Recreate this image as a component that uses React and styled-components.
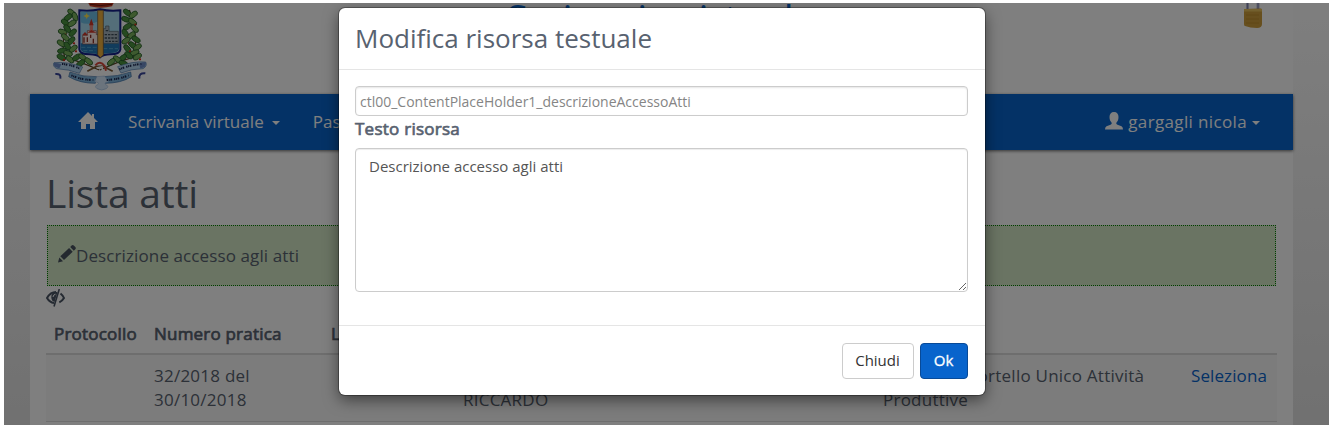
import React from "react";
import styled, { createGlobalStyle } from "styled-components";

const Global = createGlobalStyle`
  * { box-sizing: border-box; }
  html, body { margin: 0; padding: 0; background: #fff; }
  body { font-family: "Open Sans", "Noto Sans", sans-serif; font-size: 17px; color: #586270; }
`;

const Frame = styled.div`
  width: 1330px;
  height: 427px;
  padding: 3px 1px 2px 4px;
  overflow: hidden;
`;
const Viewport = styled.div`
  position: relative;
  height: 422px;
  overflow: hidden;
  background: linear-gradient(#fdfdfd, #e2e2e2);
`;
const Container = styled.div`
  width: 1263px;
  height: 422px;
  margin-left: 26px;
  background: #fff;
`;
const Header = styled.header`
  display: grid;
  grid-template-columns: 150px 1fr 150px;
  height: 91px;
  overflow: hidden;
`;
const CrestSlot = styled.div`
  padding-left: 23px;
  svg { display: block; }
`;
const SiteTitle = styled.h1`
  margin: -12px 0 0 -1px;
  text-align: center;
  font-size: 39px;
  line-height: 54px;
  font-weight: 400;
  color: #0a66cc;
`;
const LockSlot = styled.div`
  display: flex;
  justify-content: flex-end;
  padding-right: 30px;
`;
const Navbar = styled.nav`
  display: flex;
  align-items: center;
  height: 56px;
  padding: 0 33px 2px 48px;
  background: #0864cc;
  color: #fff;
  box-shadow: 0 1px 3px rgba(0, 0, 0, 0.6);
`;
const NavItem = styled.span`
  display: flex;
  align-items: center;
  white-space: nowrap;
  margin-left: ${(p) => p.$gap || "0"};
  letter-spacing: ${(p) => p.$spacing || "0.06px"};
  svg { display: block; }
`;
const Caret = styled.i`
  margin: 4px 0 0 ${(p) => p.$gap || 8}px;
  border: 4px solid transparent;
  border-top-color: currentColor;
  border-bottom: 0;
`;
const Main = styled.main`
  padding: 0 16px;
`;
const PageTitle = styled.h2`
  margin: 0;
  padding-top: 16px;
  height: 75px;
  font-size: 39px;
  line-height: 54px;
  font-weight: 400;
  letter-spacing: -0.2px;
`;
const Notice = styled.div`
  display: flex;
  align-items: center;
  height: 61px;
  margin: 0 1px;
  padding-left: 10px;
  border: 1px dotted #008000;
  background: #d4e8c6;
  letter-spacing: 0.11px;
  svg { display: block; margin-top: -4px; }
`;
const EyeRow = styled.div`
  height: 29px;
  padding-top: 3px;
  svg { display: block; }
`;
const Table = styled.table`
  width: 1231px;
  table-layout: fixed;
  border-collapse: collapse;
  line-height: 24px;
`;
const Th = styled.th`
  width: ${(p) => p.$w}px;
  height: 39px;
  padding: 6px 8px 7px;
  text-align: left;
  vertical-align: middle;
  white-space: nowrap;
  overflow: hidden;
  font-weight: 400;
  -webkit-text-stroke: 0.7px currentColor;
  letter-spacing: 0.2px;
  border-bottom: 2px solid #ddd;
`;
const Td = styled.td`
  height: 66px;
  padding: 9px 8px;
  vertical-align: top;
  white-space: nowrap;
  letter-spacing: 0.24px;
  background: #f9f9f9;
  border-bottom: 1px solid #ddd;
`;
const Link = styled.a`
  color: #0864cc;
  padding-left: 1px;
  letter-spacing: 0.1px;
`;
const Backdrop = styled.div`
  position: absolute;
  inset: 0;
  background: rgba(0, 0, 0, 0.5);
`;
const Dialog = styled.section`
  position: absolute;
  left: 335px;
  top: 5px;
  width: 645.5px;
  height: 387px;
  display: flex;
  flex-direction: column;
  background: #fff;
  border-radius: 6px;
  box-shadow: 0 0 0 1px rgba(0, 0, 0, 0.3), 0 5px 15px rgba(0, 0, 0, 0.5);
`;
const DialogTitle = styled.h3`
  margin: 0;
  height: 62px;
  padding: 12px 16px;
  font-size: 26px;
  line-height: 37px;
  font-weight: 400;
  border-bottom: 1px solid #e5e5e5;
`;
const DialogBody = styled.div`
  display: flex;
  flex-direction: column;
  height: 256px;
  padding: 16px 17px 16px 16px;
  border-bottom: 1px solid #e5e5e5;
`;
const KeyInput = styled.input`
  height: 30px;
  padding: 0 4px;
  border: 1px solid #ccc;
  border-radius: 4px;
  box-shadow: inset 0 1px 2px rgba(0, 0, 0, 0.1);
  font: 14px "Open Sans", sans-serif;
  color: #858585;
  background: #fff;
  outline: 0;
`;
const Label = styled.label`
  height: 32px;
  padding-top: 1px;
  line-height: 24px;
  -webkit-text-stroke: 0.7px currentColor;
  letter-spacing: 0.25px;
`;
const TextArea = styled.textarea`
  height: 144px;
  padding: 6px 13px;
  border: 1px solid #ccc;
  border-radius: 4px;
  box-shadow: inset 0 1px 1px rgba(0, 0, 0, 0.075);
  font: 15px/22px "Open Sans", sans-serif;
  color: #555;
  outline: 0;
`;
const DialogFooter = styled.footer`
  display: flex;
  justify-content: flex-end;
  gap: 6px;
  padding: 17px 17px 16px 16px;
`;
const Button = styled.button`
  width: ${(p) => (p.$primary ? 48 : 72)}px;
  height: 36px;
  padding: 0 0 2px;
  border: 1px solid ${(p) => (p.$primary ? "#084a98" : "#ccc")};
  border-radius: 4px;
  background: ${(p) => (p.$primary ? "#0864cc" : "#fff")};
  color: ${(p) => (p.$primary ? "#fff" : "#333")};
  font: 15px "Open Sans", sans-serif;
  -webkit-text-stroke: ${(p) => (p.$primary ? "0.3px #fff" : "0")};
`;

const leaves = [
  [95, 38, 40], [84, 52, -35], [105, 50, 70], [76, 68, 35], [96, 70, -30], [82, 86, 50], [68, 96, 20],
  [98, 98, -45], [76, 112, 40], [94, 122, -50], [64, 130, 30], [82, 138, 60], [100, 146, -40], [66, 152, -15],
  [84, 160, 20], [64, 172, 25], [90, 178, 40], [110, 172, -30], [128, 172, 40], [122, 190, -35], [146, 184, 40],
  [262, 38, 40], [280, 44, -35], [258, 58, 20], [278, 66, 35], [262, 80, -30], [284, 86, 45], [256, 100, 60],
  [274, 106, -40], [288, 118, 30], [258, 122, -30], [278, 136, 40], [292, 142, -35], [262, 146, 50], [284, 158, -20],
  [266, 166, 35], [292, 170, -30], [248, 174, -40], [232, 178, 35], [250, 190, 20], [214, 186, -40],
];

const Crest = () => (
  <svg width="97" height="91" viewBox="39 9 291 273">
    <path d="M145 9h76l-5 10q-33 8-66 0z" fill="#c43a22" />
    <path d="M150 13q32 7 66 0" fill="none" stroke="#6b1a12" strokeWidth="3" />
    <path d="M92 30Q60 120 74 172q40 10 104 38M268 30q30 90 12 142q-40 10-100 38" fill="none" stroke="#5d4420" strokeWidth="4" />
    {leaves.map(([x, y, r], i) => (
      <g key={i}>
        <ellipse cx={x} cy={y} rx="14" ry="7.500" transform={`rotate(${r} ${x} ${y})`} fill={i % 2 ? "#4c9440" : "#7cb45e"} stroke="#26602a" strokeWidth="2.500" />
        {i % 3 === 0 && <circle cx={x + 8} cy={y + 8} r="3.400" fill="#d32918" />}
      </g>
    ))}
    <path d="M118 31q32 4 62-3q32 7 61 3v118q-2 14-30 14q-20 0-31 9q-10-9-31-9q-29 0-31-14z" fill="#a8dcf2" stroke="#14208c" strokeWidth="6" />
    <path d="M122 130h115v18q-2 11-27 11q-20 0-30 8q-10-8-30-8q-26 0-28-11z" fill="#2478b8" />
    <path d="M122 35h50v30q-30 12-50 2z" fill="#6fc0e6" />
    <path d="M128 106h14V92h27v12h6v28h-47z" fill="#fbe9e4" stroke="#8c4a42" strokeWidth="2" />
    <path d="M149 72h10v22h-10z" fill="#e8897c" />
    <path d="M126 106l9-10l9 10zM142 98l12-8l16 8zM147 76l7-20l7 20z" fill="#d0382a" />
    <path d="M132 112v16M142 112v14M152 104v10M160 116v14" stroke="#8c3027" strokeWidth="4" />
    <path d="M190 130V86h7v-8h10v16h28v36z" fill="#a7b4be" stroke="#53626e" strokeWidth="2" />
    <path d="M197 92h9M194 104h40M194 114h40M196 124h40" stroke="#3d4d5b" strokeWidth="4" strokeDasharray="7 3" />
    <path d="M124 142h48M190 146h44M130 152h36" stroke="#6cbde0" strokeWidth="2" strokeDasharray="12 5" />
    <path d="M173 31h17v134l-9 8l-8-8z" fill="#efb13e" stroke="#5a4630" strokeWidth="2" />
    <path d="M140 39l3 6l7 3l-7 3l-3 6l-3-6l-7-3l7-3z" fill="#ffe54c" />
    <path d="M42 188q40-4 86 13l-10 19q-30-12-68-14q-14-8-8-18zM317 186q-40-3-84 14l10 19q32-13 66-13q14-8 8-20z" fill="#b4d6f0" stroke="#4b78ac" strokeWidth="2" />
    <path d="M42 188q12 0 22 5l-6 12q-20-4-16-17zM317 186q-12 0-20 5l4 14q20-2 16-19z" fill="#6f8cc8" />
    <path d="M90 216q38 16 80 14l-4 20q-46 0-80-20zM190 230q44 0 82-14l2 14q-30 20-82 20z" fill="#7fb4dc" stroke="#3c6ea4" strokeWidth="2" />
    <path d="M170 230l-6 16q16 0 9 8q-12 4-2 12q14 8 28 0q10-8-2-12q-6-8 9-8l-12-18z" fill="#d6e8fa" stroke="#8eb0d8" strokeWidth="1.500" />
    <path d="M46 222q18-2 15 14M316 220q-20-2-18 16" fill="none" stroke="#3b479c" strokeWidth="6" />
    <path d="M66 192q28 2 54 14M238 208q28-12 66-16M94 226q30 14 66 14M200 240q36-2 66-14" fill="none" stroke="#1d2850" strokeWidth="6" strokeDasharray="4 2 3 2 5 6" />
    <path d="M142 214l26-14l20-2l30 16" fill="none" stroke="#7c5a34" strokeWidth="5" />
    <path d="M166 196q14-16 28 2l4 14" fill="none" stroke="#d9473a" strokeWidth="6" />
    <path d="M170 204l16-4l2 14" fill="none" stroke="#fff" strokeWidth="5" />
  </svg>
);

const Lock = () => (
  <svg width="20" height="26" viewBox="0 0 20 26">
    <path d="M4.500 0v6M15 0v6" stroke="#b7b9d6" strokeWidth="3" />
    <path d="M4.500 0v6M15 0v6" stroke="#8386aa" strokeWidth="1" />
    <path d="M1 6l17-.5q1 0 1 1.500v14q0 4-5 4q-7 0-12-2q-1 0-1-2z" fill="#cf9f3c" />
    <path d="M1 6h18v2.500H1z" fill="#e6c05c" />
    <path d="M3 12h13M3 16h13M3 20h13" stroke="#bd8b2c" strokeWidth=".8" />
  </svg>
);

const Home = () => (
  <svg width="20" height="18" viewBox="0 0 20 18">
    <path d="M10 0L0 10h3v7h5v-5h4v5h5v-7h3l-4-4V2h-2v2z" fill="#fff" />
  </svg>
);
const User = () => (
  <svg width="18" height="18" viewBox="0 0 18 18">
    <path d="M9 0C6 0 4.500 2 4.500 5c0 3 1 4.200 2 5.500c.5 1 .2 1.700-1 2.200L1.500 14.200Q0 15 0 17.500h18q0-2.500-1.500-3.300l-4-1.500c-1.200-.5-1.500-1.200-1-2.200c1-1.300 2-2.500 2-5.500C13.500 2 12 0 9 0z" fill="#fff" />
  </svg>
);
const Pencil = () => (
  <svg width="18" height="18" viewBox="0 0 18 18" fill="#48525f">
    <path d="M0 17.500l1.300-5l3.700 3.700zM2.300 11.300l8.800-8.300l3.600 3.700l-8.700 8.400zM12.200 2l1.400-1.400q1.100-1 2.200 0l1.500 1.500q1 1.100 0 2.100l-1.500 1.500z" />
  </svg>
);
const EyeOff = () => (
  <svg width="19" height="18" viewBox="0 0 19 18">
    <path d="M8 14C4.500 13.500 2.500 11.500 1 9Q4.500 3 10 3M14.500 4.500Q17 6.500 18 9Q16.500 11.700 13.300 13.300" fill="none" stroke="#4a5564" strokeWidth="2" />
    <path d="M10 3Q5 3.500 5.300 8.500Q5.500 12 8.500 13L11.500 3z" fill="#4a5564" />
    <path d="M13.300 0L8 17.500" stroke="#4a5564" strokeWidth="1.600" />
    <path d="M7 8q.3-2.500 2.500-2.800" fill="none" stroke="#fff" strokeWidth="1" />
  </svg>
);

export default function App() {
  return (
    <Frame>
      <Global />
      <Viewport>
        <Container>
          <Header>
            <CrestSlot><Crest /></CrestSlot>
            <SiteTitle>Scrivania virtuale</SiteTitle>
            <LockSlot><Lock /></LockSlot>
          </Header>
          <Navbar>
            <NavItem><Home /></NavItem>
            <NavItem $gap="30px">Scrivania virtuale<Caret /></NavItem>
            <NavItem $gap="33px">Pas</NavItem>
            <NavItem $gap="auto" $spacing="0.36px"><User />&nbsp;gargagli nicola<Caret $gap={5} /></NavItem>
          </Navbar>
          <Main>
            <PageTitle>Lista atti</PageTitle>
            <Notice><Pencil />Descrizione accesso agli atti</Notice>
            <EyeRow><EyeOff /></EyeRow>
            <Table>
              <thead>
                <tr>
                  <Th $w={100}>Protocollo</Th>
                  <Th $w={177}>Numero pratica</Th>
                  <Th $w={132}>L</Th>
                  <Th $w={420} />
                  <Th $w={307} />
                  <Th $w={95} />
                </tr>
              </thead>
              <tbody>
                <tr>
                  <Td />
                  <Td>32/2018 del<br />30/10/2018</Td>
                  <Td />
                  <Td><br />RICCARDO</Td>
                  <Td>Settore - Sportello Unico Attività<br />Produttive</Td>
                  <Td><Link>Seleziona</Link></Td>
                </tr>
              </tbody>
            </Table>
          </Main>
        </Container>
        <Backdrop />
        <Dialog>
          <DialogTitle>Modifica risorsa testuale</DialogTitle>
          <DialogBody>
            <KeyInput readOnly value="ctl00_ContentPlaceHolder1_descrizioneAccessoAtti" />
            <Label>Testo risorsa</Label>
            <TextArea defaultValue="Descrizione accesso agli atti" />
          </DialogBody>
          <DialogFooter>
            <Button>Chiudi</Button>
            <Button $primary>Ok</Button>
          </DialogFooter>
        </Dialog>
      </Viewport>
    </Frame>
  );
}
